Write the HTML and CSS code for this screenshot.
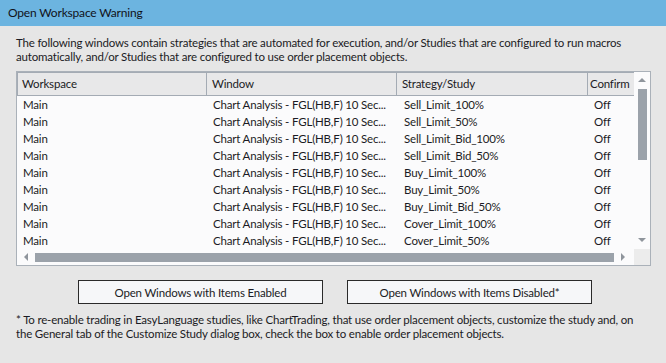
FILE: index.html
```html
<!DOCTYPE html>
<html>
<head>
<meta charset="utf-8">
<link rel="stylesheet" href="styles.css">
</head>
<body>
<div class="window">
  <div class="titlebar">Open Workspace Warning</div>
  <div class="content">
    <p class="intro">The following windows contain strategies that are automated for execution, and/or Studies that are configured to run macros automatically, and/or Studies that are configured to use order placement objects.</p>
    <div class="grid">
      <div class="grid-top">
        <div class="table">
          <div class="row head">
            <div class="cell c1">Workspace</div>
            <div class="cell c2">Window</div>
            <div class="cell c3">Strategy/Study</div>
            <div class="cell c4">Confirm</div>
          </div>
          <div class="row"><div class="cell c1">Main</div><div class="cell c2">Chart Analysis - FGL(HB,F) 10 Sec...</div><div class="cell c3">Sell_Limit_100%</div><div class="cell c4">Off</div></div>
          <div class="row"><div class="cell c1">Main</div><div class="cell c2">Chart Analysis - FGL(HB,F) 10 Sec...</div><div class="cell c3">Sell_Limit_50%</div><div class="cell c4">Off</div></div>
          <div class="row"><div class="cell c1">Main</div><div class="cell c2">Chart Analysis - FGL(HB,F) 10 Sec...</div><div class="cell c3">Sell_Limit_Bid_100%</div><div class="cell c4">Off</div></div>
          <div class="row"><div class="cell c1">Main</div><div class="cell c2">Chart Analysis - FGL(HB,F) 10 Sec...</div><div class="cell c3">Sell_Limit_Bid_50%</div><div class="cell c4">Off</div></div>
          <div class="row"><div class="cell c1">Main</div><div class="cell c2">Chart Analysis - FGL(HB,F) 10 Sec...</div><div class="cell c3">Buy_Limit_100%</div><div class="cell c4">Off</div></div>
          <div class="row"><div class="cell c1">Main</div><div class="cell c2">Chart Analysis - FGL(HB,F) 10 Sec...</div><div class="cell c3">Buy_Limit_50%</div><div class="cell c4">Off</div></div>
          <div class="row"><div class="cell c1">Main</div><div class="cell c2">Chart Analysis - FGL(HB,F) 10 Sec...</div><div class="cell c3">Buy_Limit_Bid_50%</div><div class="cell c4">Off</div></div>
          <div class="row"><div class="cell c1">Main</div><div class="cell c2">Chart Analysis - FGL(HB,F) 10 Sec...</div><div class="cell c3">Cover_Limit_100%</div><div class="cell c4">Off</div></div>
          <div class="row"><div class="cell c1">Main</div><div class="cell c2">Chart Analysis - FGL(HB,F) 10 Sec...</div><div class="cell c3">Cover_Limit_50%</div><div class="cell c4">Off</div></div>
        </div>
        <div class="vscroll">
          <div class="arrow up"></div>
          <div class="vtrack"><div class="vthumb"></div></div>
          <div class="arrow down"></div>
        </div>
      </div>
      <div class="grid-bottom">
        <div class="hscroll">
          <div class="arrow left"></div>
          <div class="hthumb"></div>
          <div class="arrow right"></div>
        </div>
        <div class="corner"></div>
      </div>
    </div>
    <div class="buttons">
      <button class="btn">Open Windows with Items Enabled</button>
      <button class="btn">Open Windows with Items Disabled*</button>
    </div>
    <p class="note">* To re-enable trading in EasyLanguage studies, like ChartTrading, that use order placement objects, customize the study and, on the General tab of the Customize Study dialog box, check the box to enable order placement objects.</p>
  </div>
</div>
</body>
</html>
```

FILE: styles.css
```css
html, body {
  margin: 0;
  padding: 0;
}
body {
  width: 666px;
  height: 363px;
  background: #e6e6e6;
  font-family: Lato, "Noto Sans", sans-serif;
  font-size: 11.5px;
  letter-spacing: -0.18px;
  color: #1b1b24;
  overflow: hidden;
}
.titlebar {
  height: 26px;
  line-height: 26px;
  background: #6cb4e0;
  padding-left: 8px;
  font-size: 12px;
  color: #10121a;
}
.content {
  padding: 0 0 0 16px;
}
.intro {
  margin: 10px 0 0 0;
  line-height: 14px;
  width: 640px;
}
.grid {
  margin-top: 7px;
  width: 633px;
  border: 1px solid #aab1b9;
  background: #fbfbfc;
  display: flex;
  flex-direction: column;
}
.grid-top {
  display: flex;
}
.table {
  width: 617px;
}
.row {
  display: flex;
  height: 17px;
  line-height: 17px;
}
.row.head {
  height: 24px;
  line-height: 22px;
  background: #e8e8e9;
}
.cell {
  box-sizing: border-box;
  padding-left: 6px;
  white-space: nowrap;
  overflow: hidden;
}
.head .cell {
  border: 1px solid #a4abb4;
  border-left: none;
  padding-left: 5px;
}
.head .c1 { border-left: 1px solid #a4abb4; padding-left: 4px; }
.c1 { width: 190px; }
.c2 { width: 190px; }
.c3 { width: 191px; padding-left: 7px; }
.c4 { width: 46px; }
.head .c2, .head .c3, .head .c4 { padding-left: 5px; }
.head .c4 { padding-left: 2px; border-right: none; }
.vscroll {
  width: 16px;
  display: flex;
  flex-direction: column;
  align-items: center;
  background: #fbfbfc;
}
.vtrack {
  flex: 1;
  width: 100%;
  display: flex;
  justify-content: center;
}
.vthumb {
  width: 9px;
  height: 71px;
  background: #9ba2aa;
}
.arrow {
  width: 0;
  height: 0;
  flex: none;
}
.arrow.up {
  margin: 6px 0 7px 0;
  border-left: 4px solid transparent;
  border-right: 4px solid transparent;
  border-bottom: 4px solid #8f959c;
}
.arrow.down {
  margin: 4px 0 7px 0;
  border-left: 4px solid transparent;
  border-right: 4px solid transparent;
  border-top: 4px solid #8f959c;
}
.grid-bottom {
  display: flex;
  height: 16px;
}
.hscroll {
  width: 617px;
  display: flex;
  align-items: center;
  background: #fbfbfc;
}
.arrow.left {
  margin: 0 7px 0 7px;
  border-top: 4px solid transparent;
  border-bottom: 4px solid transparent;
  border-right: 4px solid #8f959c;
}
.arrow.right {
  margin: 0 9px 0 7px;
  border-top: 4px solid transparent;
  border-bottom: 4px solid transparent;
  border-left: 4px solid #8f959c;
}
.hthumb {
  flex: 1;
  height: 9px;
  background: #9ba2aa;
}
.corner {
  width: 16px;
  background: #ececec;
}
.buttons {
  display: flex;
  gap: 24px;
  margin-top: 14px;
  padding-left: 62px;
}
.btn {
  width: 245px;
  height: 24px;
  border: 1px solid #2a2a2a;
  background: #f6f7f9;
  font-family: inherit;
  font-size: 11.5px;
  letter-spacing: -0.18px;
  color: #1b1b24;
  padding: 0;
  margin: 0;
}
.note {
  margin: 9px 0 0 0;
  line-height: 14px;
  width: 628px;
}
```
